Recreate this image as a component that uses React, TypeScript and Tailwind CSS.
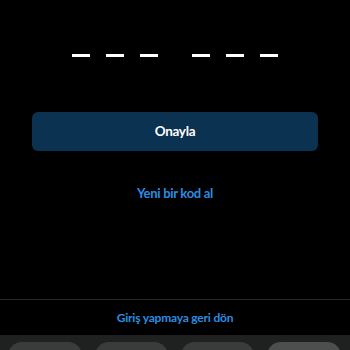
export default function App() {
  const slots = ["a", "b", "c", "d", "e", "f"];
  const dash = (k: string) => (
    <div key={k} className="flex w-[34px] justify-center">
      <div className="h-[3px] w-[18px] bg-white" />
    </div>
  );
  return (
    <div className="flex h-[350px] w-[350px] flex-col overflow-hidden bg-black font-['Lato',sans-serif]">
      <div className="flex pt-[54px] justify-center">
        <div className="flex">{slots.slice(0, 3).map(dash)}</div>
        <div className="w-[18px]" />
        <div className="flex">{slots.slice(3).map(dash)}</div>
      </div>
      <div className="px-8 pt-[55px]">
        <button className="flex h-[39px] w-full items-center justify-center rounded-md bg-[#0b3250] text-[13.5px] font-bold tracking-[-0.3px] text-white">
          Onayla
        </button>
      </div>
      <div className="pt-[33px] text-center text-[13px] font-bold tracking-[-0.3px] text-[#2b8de0]">
        Yeni bir kod al
      </div>
      <div className="flex-1" />
      <div className="border-t border-[#262626] pt-[9px] pb-[8px] text-center text-[12px] font-bold tracking-[-0.2px] text-[#2b8de0]">
        Giriş yapmaya geri dön
      </div>
      <div className="flex h-[15px] gap-[13px] bg-[#1f2121] px-2 pt-[7px]">
        <div className="h-[20px] w-[74px] rounded-t-[14px] bg-[#3a3c3c]" />
        <div className="h-[20px] w-[73px] rounded-t-[14px] bg-[#3a3c3c]" />
        <div className="h-[20px] w-[73px] rounded-t-[14px] bg-[#3a3c3c]" />
        <div className="h-[20px] w-[74px] rounded-t-[14px] bg-[#4d4f4f]" />
      </div>
    </div>
  );
}
